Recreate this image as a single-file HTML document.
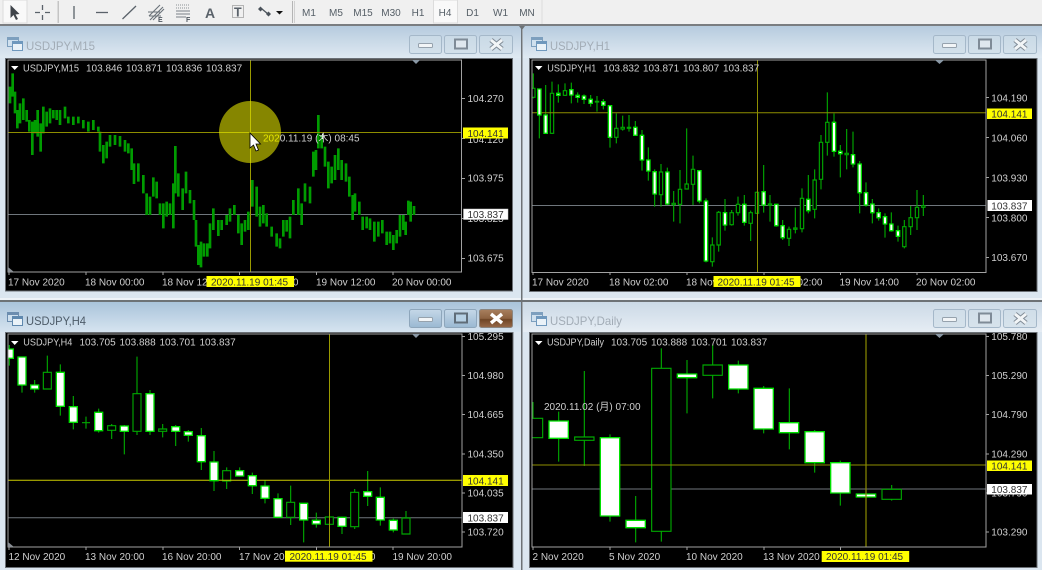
<!DOCTYPE html>
<html><head><meta charset="utf-8"><style>
html,body{margin:0;padding:0;background:#dbe6f0;width:1042px;height:570px;overflow:hidden}
svg{display:block}
text{font-family:"Liberation Sans","Noto Sans CJK JP",sans-serif;font-size:10px;fill:#cfcfcf}
.tf{fill:#555e66;font-size:10px;text-anchor:middle}
.tt{font-size:12px;fill:#a2acb6}
.wick{fill:none;stroke:#00a800;stroke-width:3.4}
.dk{fill:#000;stroke:#00a800;stroke-width:3.4}
.wh{fill:#fff;stroke:#00e000;stroke-width:4}
.fr{fill:none;stroke:#a2a2a2;stroke-width:1}
.tick{stroke:#a2a2a2;stroke-width:1;fill:none}
.gl{stroke:#6f767c;stroke-width:1}
.btn{fill:#cfdde8;fill-opacity:.6;stroke:#a5b8c9;stroke-width:1}
.ic{fill:none;stroke:#5a626a;stroke-width:1.3}
.mx{fill:#dfe7ee;stroke:#7f8b97;stroke-width:2}
.mn{fill:#f2f5f7;stroke:#96a2ad;stroke-width:1}
.xo{stroke:#808b96;stroke-width:5;fill:none}
.xi{stroke:#f2f5f7;stroke-width:3;fill:none}
</style></head><body>
<svg width="1042" height="570" viewBox="0 0 1042 570" xmlns="http://www.w3.org/2000/svg">
<defs>
<linearGradient id="t1" x1="0" y1="0" x2="0" y2="1"><stop offset="0" stop-color="#b6cbde"/><stop offset="1" stop-color="#dfe9f2"/></linearGradient>
<linearGradient id="t2" x1="0" y1="0" x2="0" y2="1"><stop offset="0" stop-color="#cbd9e6"/><stop offset="1" stop-color="#e6edf4"/></linearGradient>
<linearGradient id="t3" x1="0" y1="0" x2="0" y2="1"><stop offset="0" stop-color="#a9c3da"/><stop offset="1" stop-color="#d6e4f0"/></linearGradient>
<linearGradient id="cl" x1="0" y1="0" x2="0" y2="1"><stop offset="0" stop-color="#a87f5e"/><stop offset=".5" stop-color="#8d6240"/><stop offset=".55" stop-color="#6f4525"/><stop offset="1" stop-color="#96694a"/></linearGradient>
<linearGradient id="ab" x1="0" y1="0" x2="0" y2="1"><stop offset="0" stop-color="#c5d8e8"/><stop offset="1" stop-color="#9ab8d2"/></linearGradient>
<clipPath id="c1"><rect x="8" y="60" width="454" height="212"/></clipPath>
<clipPath id="c2"><rect x="532" y="60" width="454" height="212"/></clipPath>
<clipPath id="c3"><rect x="8" y="334" width="454" height="213"/></clipPath>
<clipPath id="c4"><rect x="532" y="334" width="454" height="213"/></clipPath>
</defs>

<!-- backgrounds -->
<rect width="1042" height="570" fill="#dbe6f0"/>
<rect x="0" y="26" width="521" height="32" fill="url(#t1)"/>
<rect x="523" y="26" width="519" height="32" fill="url(#t1)"/>
<rect x="0" y="302" width="521" height="30" fill="url(#t3)"/>
<rect x="523" y="302" width="519" height="30" fill="url(#t2)"/>
<rect x="0" y="298" width="1042" height="2" fill="#eef3f8"/>
<rect x="0" y="300" width="1042" height="2" fill="#6d7276"/>
<rect x="521" y="26" width="1.5" height="544" fill="#6d7276"/>

<!-- toolbar -->
<rect width="1042" height="24" fill="#f0f0f0"/>
<rect y="24" width="1042" height="2" fill="#7a7d80"/>
<rect x="3" y="0" width="24" height="23" fill="#f9f9f9" stroke="#dcdcdc"/>
<path d="M10.500 5L10.500 18L13.500 15L16 20L18 19L15.500 14.500L19.500 14Z" fill="#3f444a"/>
<path class="ic" d="M42.500 5V10M42.500 15V20M35 12.500H40M45 12.500H50"/>
<rect x="57.500" y="1" width="1.500" height="22" fill="#c4c4c4"/>
<path class="ic" d="M74 6V19"/>
<path class="ic" d="M96 12.500H108"/>
<path class="ic" d="M122.500 19L136 6"/>
<path d="M149 16L160 5M150 20L163 7M153 20L164 9M148 12H160M149 16H161" fill="none" stroke="#6a7279" stroke-width="1.100"/>
<text x="158" y="22" style="font-size:7px;font-weight:bold;fill:#4f5760">E</text>
<path d="M176 5H190M176 8H190" stroke="#8a8f94" stroke-width="1" stroke-dasharray="1 1"/>
<path d="M176 11H190M176 14H190M176 17H186" stroke="#7a8087" stroke-width="1"/>
<text x="186" y="22" style="font-size:7px;font-weight:bold;fill:#4f5760">F</text>
<text x="205" y="18" style="font-size:14px;font-weight:bold;fill:#5a626a">A</text>
<rect x="232.500" y="5.500" width="11" height="12" fill="none" stroke="#777" stroke-dasharray="1 1"/>
<text x="234" y="16.500" style="font-size:12.500px;font-weight:bold;fill:#5a626a">T</text>
<path d="M258 9L260.500 6.500L263 9L260.500 11.500ZM266 14L268.500 11.500L271 14L268.500 16.500Z" fill="#4a525a"/>
<path d="M262 9L268 14" stroke="#4a525a" stroke-width="1.300"/>
<path d="M276 11H283L279.500 14.500Z" fill="#111"/>
<rect x="292" y="1" width="1" height="22" fill="#b5b5b5"/><rect x="294" y="1" width="1" height="22" fill="#d0d0d0"/>
<rect x="433.500" y="0" width="24" height="23" fill="#f9f9f9" stroke="#dcdcdc"/>
<text class="tf" x="309" y="16">M1</text><text class="tf" x="336" y="16">M5</text><text class="tf" x="363" y="16">M15</text><text class="tf" x="391" y="16">M30</text><text class="tf" x="418" y="16">H1</text><text class="tf" x="445" y="16">H4</text><text class="tf" x="472.500" y="16">D1</text><text class="tf" x="500.500" y="16">W1</text><text class="tf" x="527" y="16">MN</text>
<rect x="541.500" y="0" width="1" height="24" fill="#dcdcdc"/>
<path d="M519 26H525L522 30Z" fill="#6d7276"/>

<!-- window titles -->
<g>
<g transform="translate(7,37)"><rect x=".5" y=".5" width="11" height="9" fill="#cfe0ee" stroke="#7d9fbe"/><rect x="5.500" y="4.500" width="10" height="9" fill="#eaf2f8" stroke="#6f98bd"/><rect x="1" y="1" width="10" height="2" fill="#7d9fbe"/><rect x="6" y="5" width="9" height="2" fill="#6f98bd"/></g>
<g transform="translate(531,37)"><rect x=".5" y=".5" width="11" height="9" fill="#cfe0ee" stroke="#7d9fbe"/><rect x="5.500" y="4.500" width="10" height="9" fill="#eaf2f8" stroke="#6f98bd"/><rect x="1" y="1" width="10" height="2" fill="#7d9fbe"/><rect x="6" y="5" width="9" height="2" fill="#6f98bd"/></g>
<g transform="translate(7,312)"><rect x=".5" y=".5" width="11" height="9" fill="#cfe0ee" stroke="#6c8daf"/><rect x="5.500" y="4.500" width="10" height="9" fill="#eaf2f8" stroke="#5f88ae"/><rect x="1" y="1" width="10" height="2" fill="#6c8daf"/><rect x="6" y="5" width="9" height="2" fill="#5f88ae"/></g>
<g transform="translate(531,312)"><rect x=".5" y=".5" width="11" height="9" fill="#cfe0ee" stroke="#7d9fbe"/><rect x="5.500" y="4.500" width="10" height="9" fill="#eaf2f8" stroke="#6f98bd"/><rect x="1" y="1" width="10" height="2" fill="#7d9fbe"/><rect x="6" y="5" width="9" height="2" fill="#6f98bd"/></g>
</g>
<text class="tt" x="26" y="50" textLength="69" lengthAdjust="spacingAndGlyphs">USDJPY,M15</text>
<text class="tt" x="550" y="50" textLength="60" lengthAdjust="spacingAndGlyphs">USDJPY,H1</text>
<text class="tt" x="26" y="325" textLength="60" lengthAdjust="spacingAndGlyphs" style="fill:#4d5b68">USDJPY,H4</text>
<text class="tt" x="550" y="325" textLength="72" lengthAdjust="spacingAndGlyphs">USDJPY,Daily</text>

<!-- window buttons -->
<g>
<rect class="btn" x="409.500" y="35.500" width="32" height="18" rx="2"/><rect class="mn" x="418.500" y="43.500" width="14" height="4" rx="1"/>
<rect class="btn" x="444.500" y="35.500" width="32" height="18" rx="2"/><rect class="mx" x="455" y="39.500" width="12" height="9"/>
<rect class="btn" x="479.500" y="35.500" width="33" height="18" rx="2"/><path class="xo" d="M491 40L502 49M502 40L491 49"/><path class="xi" d="M491 40L502 49M502 40L491 49"/>
<rect class="btn" x="933.500" y="35.500" width="32" height="18" rx="2"/><rect class="mn" x="942.500" y="43.500" width="14" height="4" rx="1"/>
<rect class="btn" x="968.500" y="35.500" width="32" height="18" rx="2"/><rect class="mx" x="979" y="39.500" width="12" height="9"/>
<rect class="btn" x="1003.500" y="35.500" width="33" height="18" rx="2"/><path class="xo" d="M1015 40L1026 49M1026 40L1015 49"/><path class="xi" d="M1015 40L1026 49M1026 40L1015 49"/>
<rect x="409.500" y="309.500" width="32" height="18" rx="2" fill="url(#ab)" stroke="#8ea6bb"/><rect class="mn" x="418.500" y="317.500" width="14" height="4" rx="1"/>
<rect x="444.500" y="309.500" width="32" height="18" rx="2" fill="url(#ab)" stroke="#8ea6bb"/><rect x="455" y="313.500" width="12" height="9" fill="#b6d0e4" stroke="#5f6c78" stroke-width="2"/>
<rect x="479.500" y="309.500" width="33" height="18" rx="2" fill="url(#cl)" stroke="#8a8580"/><path d="M491 314L502 323M502 314L491 323" stroke="#fff" stroke-width="3.400"/>
<rect class="btn" x="933.500" y="309.500" width="32" height="18" rx="2"/><rect class="mn" x="942.500" y="317.500" width="14" height="4" rx="1"/>
<rect class="btn" x="968.500" y="309.500" width="32" height="18" rx="2"/><rect class="mx" x="979" y="313.500" width="12" height="9"/>
<rect class="btn" x="1003.500" y="309.500" width="33" height="18" rx="2"/><path class="xo" d="M1015 314L1026 323M1026 314L1015 323"/><path class="xi" d="M1015 314L1026 323M1026 314L1015 323"/>
</g>

<!-- black chart areas -->
<rect x="5.500" y="58.500" width="507" height="232.500" fill="#000" stroke="#6b7076"/>
<rect x="529.500" y="58.500" width="507.500" height="233" fill="#000" stroke="#6b7076"/>
<rect x="5.500" y="332.500" width="507.500" height="235" fill="#000" stroke="#6b7076"/>
<rect x="529.500" y="332.500" width="507.500" height="235" fill="#000" stroke="#6b7076"/>

<!-- CHART 1 M15 -->
<circle cx="250" cy="132" r="31" fill="#868600"/>
<g clip-path="url(#c1)">
<path class="gl" d="M8 214.500H462"/>
<g transform="translate(0,60) scale(.33333)" fill="none" stroke="#009c00" stroke-width="8">
<path d="M30 80V130M38 40V110M45 95V160M52 150V205M60 130V190M70 115V180M80 150V185M88 180V215M97 185V285M105 180V220M113 150V230M122 190V275M130 140V220M140 155V200M150 145V190M160 150V175M170 150V180M180 150V195M195 140V175M205 170V190M220 170V195M235 170V190M250 180V205M265 185V215M280 180V210M295 200V215M300 215V275M310 255V310M320 245V295M330 225V260M345 225V255M360 228V260M375 240V275M385 250V280M395 265V330M402 310V372M415 310V365M430 345V400M440 400V465M450 410V465M460 352V410M470 365V415M480 430V465M490 430V505M500 425V470M510 430V465M520 370V505M526 258V400M535 340V410M548 385V450M558 335V400M570 390V430M582 420V480M588 480V560M595 555V615M603 545V622M612 550V590M622 550V590M630 490V565M640 445V510M655 480V528M665 480V510M680 465V495M690 445V485M703 435V465M715 465V520M725 490V555M735 480V515M745 455V510M757 360V440M770 380V470"/>
</g>
<g transform="translate(260,60) scale(.33333)" fill="none" stroke="#009c00" stroke-width="8">
<path d="M0 440V500M10 435V490M20 460V500M35 500V530M50 520V560M60 535V565M70 480V530M80 480V515M90 470V535M100 420V465M115 385V465M125 430V495M135 370V425M150 380V430M160 275V350M168 270V330M175 165V265M185 225V265M195 260V320M205 305V385M215 320V370M225 285V360M235 265V330M245 300V360M258 310V365M268 350V410M278 405V480M285 400V455M298 425V465M308 470V510M320 470V505M330 475V510M343 485V545M355 485V530M367 480V520M380 515V555M390 515V550M400 525V570M410 510V550M420 465V530M430 465V510M437 485V525M445 422V465M452 425V485M462 438V465"/>
</g>
<path d="M8 132.500H462" stroke="#8e8e00"/>
<path d="M250.500 60V272" stroke="#9a9a00"/>
<path d="M219 132.500H281M250.500 101V163" stroke="#c4c400"/>
<path d="M322.500 133.500V139M320 136H325" stroke="#eaffea"/>
</g>
<text x="263" y="141.500"><tspan style="fill:#e6e600">202</tspan>0.11.19 (木) 08:45</text>
<path d="M250 133V148L253.500 145L256 151L258.500 150L256 144L260.500 144Z" fill="#fff" stroke="#000" stroke-width=".8"/>
<rect class="fr" x="8" y="60" width="453.500" height="212"/>
<path d="M412 60H420L416 64Z" fill="#8a98a5"/>
<path d="M8 267L14 272H8Z" fill="#8a8f95"/>
<path d="M11 66H18.500L14.700 70Z" fill="#fff"/>
<text x="23" y="71.500" textLength="56" lengthAdjust="spacingAndGlyphs">USDJPY,M15</text><text x="86" y="71.500">103.846</text><text x="126" y="71.500">103.871</text><text x="166" y="71.500">103.836</text><text x="206" y="71.500">103.837</text>
<path class="tick" d="M462 98.500h3M462 138.500h3M462 178.500h3M462 218.500h3M462 258.500h3M9 272v3M86 272v3M163 272v3M239.500 272v3M316.500 272v3M393 272v3"/>
<text x="467.500" y="102">104.270</text><text x="467.500" y="143">104.120</text><text x="467.500" y="181.500">103.975</text><text x="467.500" y="222">103.825</text><text x="467.500" y="261.500">103.675</text>
<rect x="463" y="127.500" width="45" height="11" fill="#ffff00"/><text x="467.500" y="137" style="fill:#333">104.141</text>
<rect x="463.500" y="209" width="44.500" height="10.500" fill="#fff" stroke="#ccc" stroke-width=".5"/><text x="467.500" y="218" style="fill:#333">103.837</text>
<text x="8" y="285.500">17 Nov 2020</text><text x="85" y="285.500">18 Nov 00:00</text><text x="162" y="285.500">18 Nov 12:00</text><text x="239" y="285.500">19 Nov 00:00</text><text x="316" y="285.500">19 Nov 12:00</text><text x="392" y="285.500">20 Nov 00:00</text>
<rect x="206.500" y="276" width="87.500" height="11" fill="#ffff00"/><text x="211" y="285.500" style="fill:#333">2020.11.19 01:45</text>

<!-- CHART 2 H1 -->
<g clip-path="url(#c2)">
<path class="gl" d="M532 205.500H986"/>
<g transform="translate(525,60) scale(.33333)">
<path class="wick" d="M25 40V115M43 85V235M62 75V220M81 65V222M100 73V128M120 70V108M139 68V130M158 97V128M177 103V132M197 105V140M216 108V155M235 117V148M255 135V263M274 160V250M293 167V212M312 165V215M331 183V227M351 210V332M370 262V362M389 328V440M408 312V440M427 323V435M446 393V485M465 330V490M485 205V388M504 287V435M523 330V430M543 415V607M562 532V620M581 453V575M600 417V512M620 450V497M639 410V467M658 405V497M677 452V543M696 395V462M716 315V458M735 405V485M754 432V500M773 480V540"/>
<path class="dk" d="M20 85h10V112h-10zM76 100h10V220h-10zM115 92h10V106h-10zM269 205h10V232h-10zM288 202h10V207h-10zM307 202h10V205h-10zM403 336h10V404h-10zM441 430h10V434h-10zM460 388h10V433h-10zM480 372h10V387h-10zM499 328h10V373h-10zM557 555h10V605h-10zM576 457h10V555h-10zM615 458h10V494h-10zM634 433h10V458h-10zM672 458h10V490h-10zM691 397h10V460h-10zM730 432h10V436h-10zM211 124h10V126h-10z"/>
</g>
<g transform="translate(782,30) scale(.33333)">
<path class="wick" d="M21 590V648M40 533V610M60 475V607M79 435V550M98 418V565M117 315V478M136 187V377M156 250V380M175 345V442M194 297V418M213 305V412M233 393V550M252 457V530M271 507V580M290 535V572M309 550V623M328 547V605M348 587V635M367 570V655M386 528V615M405 480V600M424 495V558"/>
<path class="dk" d="M16 598h10V625h-10zM35 594h10V598h-10zM55 505h10V596h-10zM93 450h10V538h-10zM112 337h10V448h-10zM131 277h10V337h-10zM189 370h10V374h-10zM362 590h10V650h-10zM381 563h10V590h-10zM400 532h10V563h-10zM419 527h10V532h-10z"/>
</g>
<path d="M532 112.800H986" stroke="#8e8e00"/>
<path d="M757.500 60V272" stroke="#8e8e00"/>
<g transform="translate(525,60) scale(.33333)">
<path class="wh" d="M38 87h10V165h-10zM57 165h10V220h-10zM95 100h10V106h-10zM134 89h10V105h-10zM153 106h10V112h-10zM172 108h10V118h-10zM192 118h10V130h-10zM230 125h10V136h-10zM250 137h10V232h-10zM326 202h10V226h-10zM346 226h10V300h-10zM365 300h10V333h-10zM384 335h10V402h-10zM422 336h10V432h-10zM518 332h10V423h-10zM538 423h10V603h-10zM595 458h10V495h-10zM653 433h10V487h-10zM711 395h10V435h-10zM749 433h10V497h-10zM768 497h10V533h-10z"/>
</g>
<g transform="translate(782,30) scale(.33333)">
<path class="wh" d="M74 508h10V542h-10zM151 277h10V364h-10zM170 364h10V371h-10zM208 374h10V402h-10zM228 402h10V488h-10zM247 488h10V525h-10zM266 522h10V548h-10zM285 548h10V563h-10zM304 560h10V582h-10zM323 582h10V602h-10zM343 602h10V619h-10z"/>
</g>
</g>
<rect class="fr" x="532" y="60" width="454" height="212.500"/>
<path d="M935 60H944L939.500 64Z" fill="#8a98a5"/>
<path d="M535 66H542.500L538.700 70Z" fill="#fff"/>
<text x="547.300" y="71.500" textLength="49" lengthAdjust="spacingAndGlyphs">USDJPY,H1</text><text x="603.300" y="71.500">103.832</text><text x="643" y="71.500">103.871</text><text x="683" y="71.500">103.807</text><text x="723" y="71.500">103.837</text>
<path class="tick" d="M986 97.500h3M986 137.500h3M986 177.500h3M986 217.500h3M986 257.500h3M533 272v3M610 272v3M687 272v3M764 272v3M840.500 272v3M917 272v3"/>
<text x="991.300" y="101.500">104.190</text><text x="991.300" y="141.500">104.060</text><text x="991.300" y="181.500">103.930</text><text x="991.300" y="221.500">103.800</text><text x="991.300" y="261">103.670</text>
<rect x="987" y="108.500" width="45" height="10.500" fill="#ffff00"/><text x="991.300" y="117.500" style="fill:#333">104.141</text>
<rect x="987.500" y="200" width="44.500" height="11" fill="#fff"/><text x="991.300" y="209.500" style="fill:#333">103.837</text>
<text x="532" y="285.500">17 Nov 2020</text><text x="609" y="285.500">18 Nov 02:00</text><text x="686" y="285.500">18 Nov 14:00</text><text x="763" y="285.500">19 Nov 02:00</text><text x="839.500" y="285.500">19 Nov 14:00</text><text x="916" y="285.500">20 Nov 02:00</text>
<rect x="713.500" y="276" width="87" height="11" fill="#ffff00"/><text x="717.500" y="285.500" style="fill:#333">2020.11.19 01:45</text>

<!-- CHART 3 H4 -->
<g clip-path="url(#c3)">
<path class="gl" d="M8 517.700H462" stroke="#5e6368"/>
<g transform="translate(0,300) scale(.33333)">
<path class="wick" d="M28 135V197M66 170V278M104 240V278M142 167V268M181 193V347M220 288V388M258 350V386M296 326V398M335 372V417M373 375V463M411 170V405M450 270V405M488 372V412M527 375V438M565 390V425M604 384V510M642 453V573M680 502V567M719 502V530M757 518V582"/>
<path class="dk" d="M130 217h24V267h-24zM323 377h24V391h-24zM399 281h24V394h-24zM476 387h24V394h-24zM668 512h24V543h-24z"/>
<path d="M246 368h24" stroke="#00a800" stroke-width="3.400"/>
</g>
<g transform="translate(260,300) scale(.33333)">
<path class="wick" d="M15 542V610M54 580V655M92 557V675M131 610V727M169 638V683M208 650V675M246 650V702M284 567V687M323 513V618M361 562V677M400 655V697M438 633V703"/>
<path class="dk" d="M80 607h24V652h-24zM196 651h24V673h-24zM272 577h24V680h-24zM426 654h24V702h-24z"/>
</g>
<path d="M8 480.300H462" stroke="#cccc00"/>
<path d="M329.500 334V547" stroke="#9a9a00"/>
<g transform="translate(0,300) scale(.33333)">
<path class="wh" d="M20 147h20V175h-20zM54 171h24V255h-24zM92 255h24V267h-24zM169 217h24V319h-24zM208 320h24V367h-24zM284 337h24V392h-24zM361 378h24V394h-24zM438 281h24V394h-24zM515 380h24V394h-24zM553 395h24V406h-24zM592 407h24V485h-24zM630 486h24V542h-24zM707 512h24V528h-24zM745 527h24V557h-24z"/>
</g>
<g transform="translate(260,300) scale(.33333)">
<path class="wh" d="M3 558h24V595h-24zM42 596h24V652h-24zM119 610h24V660h-24zM157 661h24V672h-24zM234 652h24V679h-24zM311 575h24V589h-24zM349 592h24V660h-24zM388 661h24V690h-24z"/>
</g>
</g>
<rect class="fr" x="8" y="334" width="454" height="213"/>
<path d="M412 334H420L416 338Z" fill="#8a98a5"/>
<path d="M8 542L14 547H8Z" fill="#8a8f95"/>
<path d="M11 341H18.500L14.700 345Z" fill="#fff"/>
<text x="23.300" y="345.500" textLength="49" lengthAdjust="spacingAndGlyphs">USDJPY,H4</text><text x="79.500" y="345.500">103.705</text><text x="119.500" y="345.500">103.888</text><text x="159.500" y="345.500">103.701</text><text x="199.500" y="345.500">103.837</text>
<path class="tick" d="M462 336.500h3M462 375.500h3M462 414.500h3M462 454h3M462 493h3M462 532h3M9 547v3M86 547v3M163 547v3M239.500 547v3M316.500 547v3M393 547v3"/>
<text x="467.500" y="340">105.295</text><text x="467.500" y="379">104.980</text><text x="467.500" y="418">104.665</text><text x="467.500" y="457.500">104.350</text><text x="467.500" y="496.500">104.035</text><text x="467.500" y="535.500">103.720</text>
<rect x="463" y="475" width="45" height="11" fill="#ffff00"/><text x="467.500" y="484.500" style="fill:#333">104.141</text>
<rect x="463" y="512" width="45" height="11" fill="#fff"/><text x="467.500" y="521.500" style="fill:#333">103.837</text>
<text x="8.500" y="560">12 Nov 2020</text><text x="85" y="560">13 Nov 20:00</text><text x="162" y="560">16 Nov 20:00</text><text x="239" y="560">17 Nov 20:00</text><text x="316" y="560">18 Nov 20:00</text><text x="392.500" y="560">19 Nov 20:00</text>
<rect x="285" y="550.700" width="87.500" height="11" fill="#ffff00"/><text x="289.500" y="560" style="fill:#333">2020.11.19 01:45</text>

<!-- CHART 4 Daily -->
<g clip-path="url(#c4)">
<path class="gl" d="M532 489H986" stroke="#5e6368"/>
<g transform="translate(522,300) scale(.33333)">
<path class="wick" d="M33 306V355M110 335V485M187 213V498M264 403V665M341 588V727M418 145V725M495 180V340M572 135V295M649 182V280M725 258V400"/>
<path class="dk" d="M4 355h58V413h-58zM158 411h58V421h-58zM389 205h58V694h-58zM543 195h58V226h-58z"/>
</g>
<g transform="translate(782,300) scale(.33333)">
<path class="wick" d="M22 265V448M98 390V518M175 482V617M329 555V602"/>
<path class="dk" d="M300 568h58V598h-58z"/>
</g>
<path d="M532 465H986" stroke="#8e8e00"/>
<g transform="translate(522,300) scale(.33333)">
<path class="wh" d="M81 363h58V415h-58zM235 413h58V648h-58zM312 661h58V683h-58zM466 222h58V233h-58zM620 195h58V267h-58zM696 265h58V387h-58z"/>
</g>
<g transform="translate(782,300) scale(.33333)">
<path class="wh" d="M-8 368h58V398h-58zM69 395h58V488h-58zM146 488h58V579h-58zM223 582h58V591h-58z"/>
</g>
<path d="M866 334V547" stroke="#8a8a00" stroke-width="1.200"/>
</g>
<rect class="fr" x="532" y="334" width="454" height="213"/>
<path d="M935 334H944L939.500 338Z" fill="#8a98a5"/>
<path d="M535 341H542.500L538.700 345Z" fill="#fff"/>
<text x="547" y="345.500" textLength="57" lengthAdjust="spacingAndGlyphs">USDJPY,Daily</text><text x="611" y="345.500">103.705</text><text x="651" y="345.500">103.888</text><text x="691" y="345.500">103.701</text><text x="731" y="345.500">103.837</text>
<text x="544" y="410">2020.11.02 (月) 07:00</text>
<path class="tick" d="M986 336.500h3M986 375.500h3M986 414.500h3M986 454h3M986 493h3M986 532h3M533 547v3M610 547v3M687 547v3M764 547v3M840.500 547v3"/>
<text x="991.300" y="340">105.780</text><text x="991.300" y="379">105.290</text><text x="991.300" y="418">104.790</text><text x="991.300" y="457.500">104.290</text><text x="991.300" y="496.500">103.790</text><text x="991.300" y="535.500">103.290</text>
<rect x="987" y="460.500" width="45" height="10.500" fill="#ffff00"/><text x="991.300" y="469.500" style="fill:#333">104.141</text>
<rect x="987" y="484" width="45" height="10.500" fill="#fff"/><text x="991.300" y="493" style="fill:#333">103.837</text>
<text x="532.500" y="560">2 Nov 2020</text><text x="609" y="560">5 Nov 2020</text><text x="686" y="560">10 Nov 2020</text><text x="763" y="560">13 Nov 2020</text>
<rect x="821.700" y="551" width="87.500" height="11" fill="#ffff00"/><text x="826" y="560" style="fill:#333">2020.11.19 01:45</text>
</svg>
</body></html>
